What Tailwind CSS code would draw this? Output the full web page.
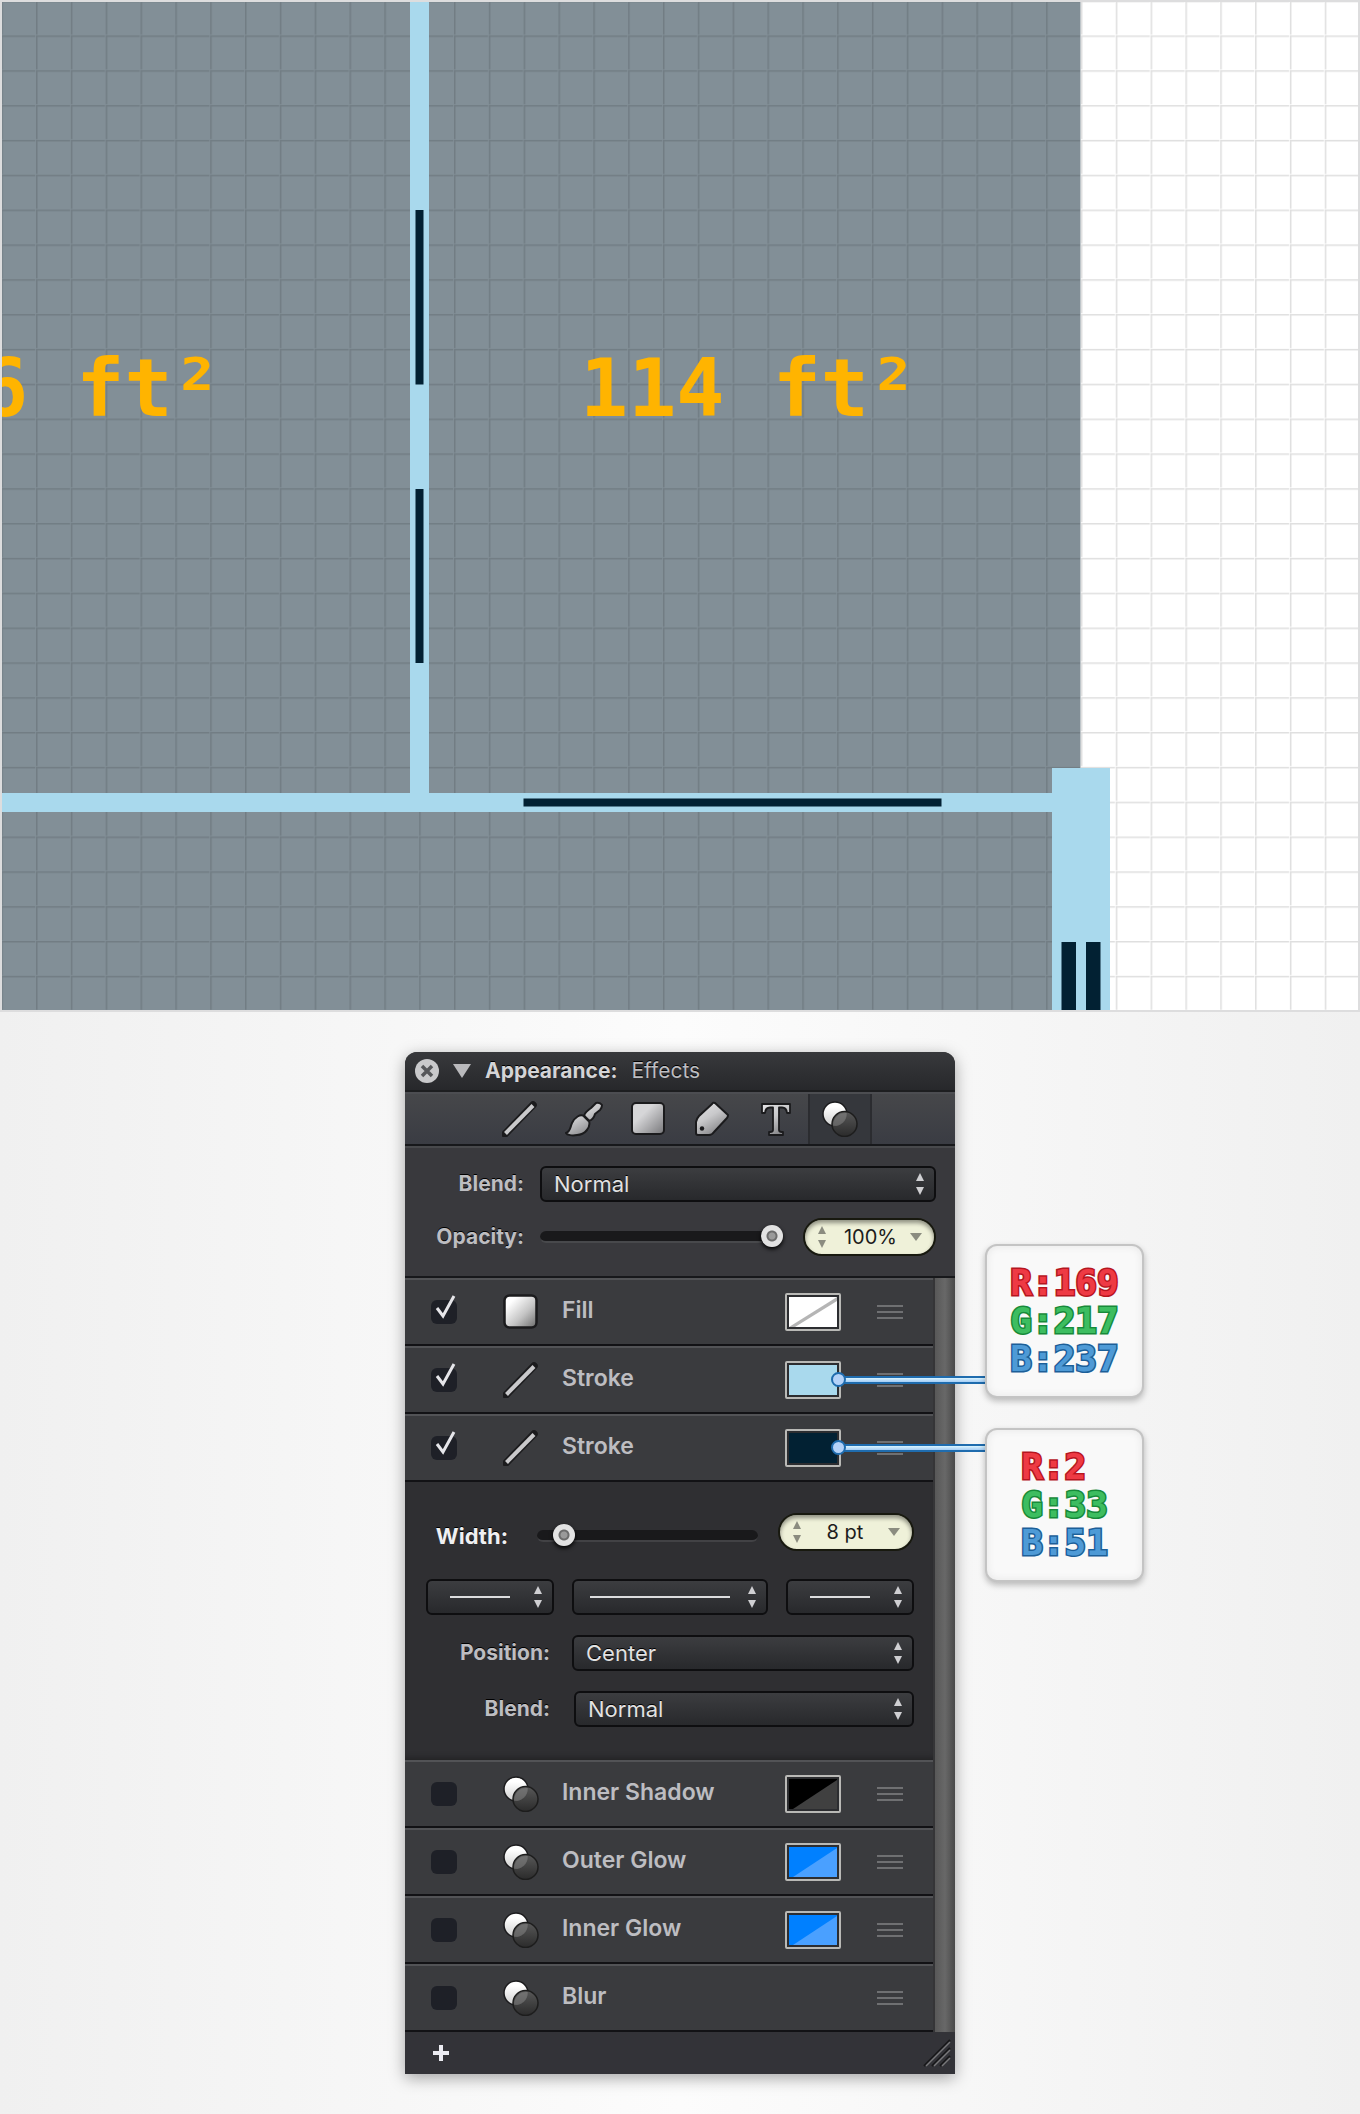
<!DOCTYPE html>
<html lang="en">
<head>
<meta charset="utf-8">
<meta name="viewport" content="width=device-width, initial-scale=1">
<title>Appearance: Effects</title>
<script src="https://cdn.jsdelivr.net/npm/@tailwindcss/browser@4"></script>
</head>
<body class="min-h-screen bg-linear-to-r from-[#f0f0f0] via-[#fcfcfc] to-[#f0f0f0] font-['Inter',sans-serif]">

<!-- Shared icons -->
<svg class="absolute size-0" aria-hidden="true">
  <defs>
    <linearGradient id="metal" x1="0" y1="0" x2="0.6" y2="1"><stop offset="0" stop-color="#e4e4e6"/><stop offset="0.5" stop-color="#c9c9cb"/><stop offset="1" stop-color="#858588"/></linearGradient>
    <linearGradient id="fillGrad" x1="0" y1="0" x2="1" y2="1"><stop offset="0.2" stop-color="#fff"/><stop offset="0.6" stop-color="#c4c4c4"/><stop offset="1" stop-color="#6a6a6a"/></linearGradient>
    <linearGradient id="toolFill" x1="0" y1="0" x2="1" y2="1"><stop offset="0.35" stop-color="#d6d6d8"/><stop offset="1" stop-color="#77777a"/></linearGradient>
    <linearGradient id="ball" x1="0" y1="0" x2="0" y2="1"><stop offset="0.2" stop-color="#fff"/><stop offset="1" stop-color="#cfcfcf"/></linearGradient>
    <linearGradient id="ballDark" x1="0" y1="0" x2="0" y2="1"><stop offset="0" stop-color="#5a5a5a"/><stop offset="1" stop-color="#2a2a2a"/></linearGradient>
  </defs>
  <symbol id="i-line" viewBox="0 0 36 36"><path d="M3 33 L31 4" stroke="#1b1b1d" stroke-width="7.5" stroke-linecap="round"/><path d="M3.500 32.500 L31 4.500" stroke="#c9c9cb" stroke-width="4"/></symbol>
  <symbol id="i-fill" viewBox="0 0 36 36"><rect x="1.500" y="1.500" width="32" height="32" rx="5" fill="url(#fillGrad)" stroke="#1b1b1d" stroke-width="2.500"/></symbol>
  <symbol id="i-square" viewBox="0 0 36 36"><rect x="2" y="2" width="32" height="31" rx="4" fill="url(#toolFill)" stroke="#1b1b1d" stroke-width="2"/></symbol>
  <symbol id="i-fx" viewBox="0 0 36 36"><circle cx="13" cy="13" r="12" fill="url(#ball)" stroke="#1b1b1d" stroke-width="1.500"/><circle cx="22.500" cy="23" r="12.500" fill="url(#ballDark)" fill-opacity="0.95" stroke="#1d1d1d" stroke-width="1.500"/><path d="M24.800 12 A12 12 0 0 1 11 24.800 A12.500 12.500 0 0 1 24.800 12" fill="#8a8a8a" fill-opacity="0.45"/></symbol>
  <symbol id="i-brush" viewBox="0 0 40 36"><path d="M2 32 C7 30 6 26 8 22 C11 16 16 13 20 15 C21 11 24 9 27 7 L32 2 Q36 1 38 4 Q38 7 36 9 L31 13 C30 17 28 19 25 20 C27 26 21 34 13 34 C8 35 3 34 2 32 Z" fill="url(#metal)" stroke="#1b1b1d" stroke-width="2" stroke-linejoin="round"/><path d="M20 15 L25 20" stroke="#1b1b1d" stroke-width="2.500"/></symbol>
  <symbol id="i-tag" viewBox="0 0 36 36"><path d="M21 2 L34 14 Q34 16 33 17 L20 31 Q18 34 15 34 L4 34 Q2 34 2 32 L2 21 Q3 17 5 15 L18 3 Q19 1 21 2 Z" fill="url(#metal)" stroke="#1b1b1d" stroke-width="2" stroke-linejoin="round"/><circle cx="8" cy="27.500" r="2.200" fill="#1b1b1d"/></symbol>
  <symbol id="i-type" viewBox="0 0 32 36"><path d="M2 3 H30 V12 H27 Q26.500 6.500 22 6.500 H19 V29 Q19 31 22 31 H23 V34 H9 V31 H10 Q13 31 13 29 V6.500 H10 Q5.500 6.500 5 12 H2 Z" fill="url(#metal)" stroke="#1b1b1d" stroke-width="1.800" stroke-linejoin="round"/></symbol>
  <symbol id="i-updown" viewBox="0 0 10 24"><path d="M5 1 L9 9 H1 Z M5 23 L9 15 H1 Z" fill="currentColor"/></symbol>
  <symbol id="i-check" viewBox="0 0 22 26"><path d="M2 14 L8 22 L19 2" fill="none" stroke="#e6e6ea" stroke-width="3"/></symbol>
  <symbol id="i-grip" viewBox="0 0 26 14"><path d="M0 1 H26 M0 7 H26 M0 13 H26" stroke="#6f7072" stroke-width="2"/></symbol>
</svg>

<main>
  <!-- Floor plan -->
  <svg class="block w-full" viewBox="0 0 1360 1012" role="img" aria-label="Floor plan">
    <defs>
      <pattern id="grid" x="1.200" y="0.600" width="34.830" height="34.830" patternUnits="userSpaceOnUse">
        <path d="M0 0.750 H34.830 M0.750 0 V34.830" transform="translate(-0.750 -0.750)" stroke="#000" stroke-opacity="0.180" stroke-width="3"/>
      </pattern>
    </defs>
    <rect width="1360" height="1012" fill="#ddddde"/>
    <rect x="2" y="2" width="1356" height="1008" fill="#fff"/>
    <rect x="2" y="2" width="1078.500" height="1008" fill="#828f97"/>
    <rect x="2" y="2" width="1356" height="1008" fill="url(#grid)" opacity="0.700"/>
    <g fill="#a9d9ed">
      <rect x="410" y="2" width="19" height="800"/>
      <rect x="2" y="793" width="1060" height="19"/>
      <rect x="1052" y="768" width="58" height="242"/>
    </g>
    <g fill="#022133">
      <rect x="415.500" y="210" width="8" height="174.500"/>
      <rect x="415.500" y="489" width="8" height="174"/>
      <rect x="523.500" y="798.500" width="418" height="8"/>
      <rect x="1061.500" y="942" width="14.500" height="68"/>
      <rect x="1086" y="942" width="14.500" height="68"/>
    </g>
    <g class="font-['DejaVu_Sans_Mono',monospace] text-[80px] font-bold" fill="#ffb400">
      <text x="-20" y="416" xml:space="preserve">6 ft²</text>
      <text x="580" y="416" xml:space="preserve">114 ft²</text>
    </g>
    <rect y="2" width="2" height="1008" fill="#ddddde"/>
  </svg>

  <section class="flex justify-center py-10">
    <div class="relative w-[550px] rounded-t-xl bg-[#39393d] text-[#bdbdc1] shadow-[0_4px_16px_rgba(0,0,0,0.35)]">

      <!-- Title bar -->
      <header class="flex h-10 items-center rounded-t-xl border-b-2 border-[#1d1e20] bg-linear-to-b from-[#38393c] to-[#27282b] pl-[10px] text-[21px] [text-shadow:0_-1px_0_#000]">
        <button class="size-6 rounded-full bg-[#c9c9cb]" aria-label="Close"><svg class="size-6" viewBox="0 0 24 24"><path d="M7 7 L17 17 M17 7 L7 17" stroke="#56575a" stroke-width="3.500"/></svg></button>
        <button class="ml-[14px]" aria-label="Collapse"><svg class="h-[14px] w-[18px]" viewBox="0 0 18 14"><path d="M0 0 H18 L9 14 Z" fill="#b9b9bc"/></svg></button>
        <h1 class="ml-[14px] font-bold text-[#d4d4d6]">Appearance:</h1>
        <span class="ml-[14px]">Effects</span>
      </header>

      <!-- Tool tabs -->
      <nav class="flex h-[54px] justify-center border-t-2 border-b-2 border-t-[#4c4d51] border-b-[#17181b] bg-linear-to-b from-[#46474a] to-[#3a3c43]">
        <button class="flex w-16 items-center justify-center" aria-label="Stroke"><svg class="size-9"><use href="#i-line"/></svg></button>
        <button class="flex w-16 items-center justify-center" aria-label="Brush"><svg class="h-9 w-10"><use href="#i-brush"/></svg></button>
        <button class="flex w-16 items-center justify-center" aria-label="Fill"><svg class="size-9"><use href="#i-square"/></svg></button>
        <button class="flex w-16 items-center justify-center" aria-label="Label"><svg class="size-9"><use href="#i-tag"/></svg></button>
        <button class="flex w-16 items-center justify-center" aria-label="Text"><svg class="h-9 w-8"><use href="#i-type"/></svg></button>
        <button class="flex w-16 items-center justify-center border-x-2 border-[#2b2c30] bg-[#35373c]" aria-label="Effects"><svg class="size-9"><use href="#i-fx"/></svg></button>
      </nav>

      <!-- Blend and opacity -->
      <div class="flex h-[132px] flex-col gap-4 border-t-2 border-b-2 border-t-[#48494c] border-b-[#17181b] pt-[18px] pr-[19px]">
        <div class="flex items-center">
          <label for="blend" class="w-[119px] text-right text-[21px] font-bold [text-shadow:0_-1px_0_#000]">Blend:</label>
          <div class="relative ml-4 flex-1">
            <select id="blend" class="h-9 w-full appearance-none rounded-md border-2 border-[#0e0e10] bg-linear-to-b from-[#3c3d40] to-[#28292c] px-3 text-[22px] leading-7 text-[#e2e2e2] [text-shadow:0_-1px_0_#000]"><option>Normal</option></select>
            <svg class="pointer-events-none absolute top-[6px] right-[11px] h-6 w-[10px] text-[#cfcfd2]"><use href="#i-updown"/></svg>
          </div>
        </div>
        <div class="flex h-[38px] items-center">
          <label for="opacity" class="w-[119px] text-right text-[21px] font-bold [text-shadow:0_-1px_0_#000]">Opacity:</label>
          <input id="opacity" type="range" value="100" class="ml-4 h-3 min-w-0 flex-1 appearance-none rounded-full border-b-2 border-[#48494c] bg-[#19191b] [&::-webkit-slider-thumb]:size-[22px] [&::-webkit-slider-thumb]:appearance-none [&::-webkit-slider-thumb]:rounded-full [&::-webkit-slider-thumb]:bg-[radial-gradient(circle,#9a9a9a_0_3px,#6c6c6c_4px_5px,#e2e2e2_6px)] [&::-webkit-slider-thumb]:shadow-[0_2px_4px_#000]">
          <div class="ml-5 flex h-[38px] w-[133px] items-center rounded-full border-2 border-[#18190f] bg-[#eff1d9] px-3 text-[#8b8c80] shadow-[inset_0_3px_4px_rgba(0,0,0,0.4)]">
            <svg class="h-6 w-[10px]"><use href="#i-updown"/></svg>
            <input aria-label="Opacity value" value="100%" class="w-0 flex-1 pl-1 text-center text-xl text-[#1c1c1c]">
            <svg class="h-[10px] w-3" viewBox="0 0 12 10"><path d="M0 1 H12 L6 9 Z" fill="currentColor"/></svg>
          </div>
        </div>
      </div>

      <div class="flex">
        <div class="min-w-0 flex-1">
          <ul>
            <li class="flex h-[68px] items-center border-t-2 border-b-2 border-t-[#525356] border-b-[#121215] bg-[#3a3b3e] pr-[30px] pl-[26px]">
              <span class="relative h-6"><input id="r1" type="checkbox" checked class="peer h-6 w-[26px] appearance-none rounded-md bg-[#1e2027]"><svg class="pointer-events-none absolute -top-[6px] left-1 hidden h-[26px] w-[22px] peer-checked:block"><use href="#i-check"/></svg></span>
              <svg class="ml-[46px] size-9"><use href="#i-fill"/></svg>
              <label for="r1" class="ml-[23px] flex-1 pb-1 text-[23px] leading-8 font-semibold">Fill</label>
              <button class="h-[38px] w-14 rounded-xs border-2 border-[#b9b9b6] bg-[#2c2d30] p-[2px]" aria-label="Fill color"><svg class="size-full" viewBox="0 0 48 30" preserveAspectRatio="none"><path d="M0 0 H48 V30 H0 Z" fill="#fff"/><path d="M0 30 L48 0 V4 L6 30 Z" fill="#b5b5b5"/></svg></button>
              <svg class="ml-9 h-[14px] w-[26px]"><use href="#i-grip"/></svg>
            </li>
            <li class="flex h-[68px] items-center border-t-2 border-b-2 border-t-[#525356] border-b-[#121215] bg-[#3a3b3e] pr-[30px] pl-[26px]">
              <span class="relative h-6"><input id="r2" type="checkbox" checked class="peer h-6 w-[26px] appearance-none rounded-md bg-[#1e2027]"><svg class="pointer-events-none absolute -top-[6px] left-1 hidden h-[26px] w-[22px] peer-checked:block"><use href="#i-check"/></svg></span>
              <svg class="ml-[46px] size-9"><use href="#i-line"/></svg>
              <label for="r2" class="ml-[23px] flex-1 pb-1 text-[23px] leading-8 font-semibold">Stroke</label>
              <button class="h-[38px] w-14 rounded-xs border-2 border-[#b9b9b6] bg-[#2c2d30] p-[2px]" aria-label="Stroke color"><span class="block size-full bg-[#a9d9ed]"></span></button>
              <svg class="ml-9 h-[14px] w-[26px]"><use href="#i-grip"/></svg>
            </li>
            <li class="flex h-[68px] items-center border-t-2 border-b-2 border-t-[#525356] border-b-[#121215] bg-[#3a3b3e] pr-[30px] pl-[26px]">
              <span class="relative h-6"><input id="r3" type="checkbox" checked class="peer h-6 w-[26px] appearance-none rounded-md bg-[#1e2027]"><svg class="pointer-events-none absolute -top-[6px] left-1 hidden h-[26px] w-[22px] peer-checked:block"><use href="#i-check"/></svg></span>
              <svg class="ml-[46px] size-9"><use href="#i-line"/></svg>
              <label for="r3" class="ml-[23px] flex-1 pb-1 text-[23px] leading-8 font-semibold">Stroke</label>
              <button class="h-[38px] w-14 rounded-xs border-2 border-[#b9b9b6] bg-[#2c2d30] p-[2px]" aria-label="Stroke color"><span class="block size-full bg-[#022133]"></span></button>
              <svg class="ml-9 h-[14px] w-[26px]"><use href="#i-grip"/></svg>
            </li>
          </ul>

          <!-- Settings of the selected stroke -->
          <div class="flex h-[278px] flex-col bg-[#2f2f32] pt-[31px] pr-[19px] pl-[21px] shadow-[inset_0_-6px_6px_-4px_rgba(0,0,0,0.3)]">
            <div class="flex h-[38px] items-center">
              <div class="flex min-w-0 flex-1 items-center pt-2">
                <label for="width" class="w-[82px] text-right text-[22px] leading-7 font-bold text-[#f0f0f2] [text-shadow:0_-1px_0_#000]">Width:</label>
                <input id="width" type="range" value="8" class="ml-[29px] h-3 min-w-0 flex-1 appearance-none rounded-full border-b-2 border-[#424245] bg-[#19191b] [&::-webkit-slider-thumb]:size-[22px] [&::-webkit-slider-thumb]:appearance-none [&::-webkit-slider-thumb]:rounded-full [&::-webkit-slider-thumb]:bg-[radial-gradient(circle,#9a9a9a_0_3px,#6c6c6c_4px_5px,#e2e2e2_6px)] [&::-webkit-slider-thumb]:shadow-[0_2px_4px_#000]">
              </div>
              <div class="ml-5 flex h-[38px] w-[136px] items-center rounded-full border-2 border-[#18190f] bg-[#eff1d9] px-3 text-[#8b8c80] shadow-[inset_0_3px_4px_rgba(0,0,0,0.4)]">
                <svg class="h-6 w-[10px]"><use href="#i-updown"/></svg>
                <input aria-label="Width value" value="8 pt" class="w-0 flex-1 text-center text-xl text-[#1c1c1c]">
                <svg class="h-[10px] w-3" viewBox="0 0 12 10"><path d="M0 1 H12 L6 9 Z" fill="currentColor"/></svg>
              </div>
            </div>
            <div class="mt-7 flex gap-[18px]">
              <button aria-label="Start cap" class="flex h-9 w-32 items-center justify-between rounded-md border-2 border-[#0e0e10] bg-linear-to-b from-[#3c3d40] to-[#28292c] pr-[9px] pl-[22px]"><span class="h-[2px] w-[60px] bg-[#dcdcde]"></span><svg class="h-6 w-[10px] text-[#cfcfd2]"><use href="#i-updown"/></svg></button>
              <button aria-label="Dash style" class="flex h-9 flex-1 items-center justify-between rounded-md border-2 border-[#0e0e10] bg-linear-to-b from-[#3c3d40] to-[#28292c] pr-[9px] pl-4"><span class="h-[2px] w-[140px] bg-[#dcdcde]"></span><svg class="h-6 w-[10px] text-[#cfcfd2]"><use href="#i-updown"/></svg></button>
              <button aria-label="End cap" class="flex h-9 w-32 items-center justify-between rounded-md border-2 border-[#0e0e10] bg-linear-to-b from-[#3c3d40] to-[#28292c] pr-[9px] pl-[22px]"><span class="h-[2px] w-[60px] bg-[#dcdcde]"></span><svg class="h-6 w-[10px] text-[#cfcfd2]"><use href="#i-updown"/></svg></button>
            </div>
            <div class="mt-5 flex items-center">
              <label for="position" class="w-[124px] text-right text-[21px] font-bold [text-shadow:0_-1px_0_#000]">Position:</label>
              <div class="relative ml-[22px] flex-1">
                <select id="position" class="h-9 w-full appearance-none rounded-md border-2 border-[#0e0e10] bg-linear-to-b from-[#3c3d40] to-[#28292c] px-3 text-[22px] leading-7 text-[#e2e2e2] [text-shadow:0_-1px_0_#000]"><option>Center</option></select>
                <svg class="pointer-events-none absolute top-[6px] right-[11px] h-6 w-[10px] text-[#cfcfd2]"><use href="#i-updown"/></svg>
              </div>
            </div>
            <div class="mt-5 flex items-center">
              <label for="strokeBlend" class="w-[124px] text-right text-[21px] font-bold [text-shadow:0_-1px_0_#000]">Blend:</label>
              <div class="relative ml-6 flex-1">
                <select id="strokeBlend" class="h-9 w-full appearance-none rounded-md border-2 border-[#0e0e10] bg-linear-to-b from-[#3c3d40] to-[#28292c] px-3 text-[22px] leading-7 text-[#e2e2e2] [text-shadow:0_-1px_0_#000]"><option>Normal</option></select>
                <svg class="pointer-events-none absolute top-[6px] right-[11px] h-6 w-[10px] text-[#cfcfd2]"><use href="#i-updown"/></svg>
              </div>
            </div>
          </div>

          <ul>
            <li class="flex h-[68px] items-center border-t-2 border-b-2 border-t-[#525356] border-b-[#121215] bg-[#3a3b3e] pr-[30px] pl-[26px]">
              <input id="r4" type="checkbox" class="h-6 w-[26px] appearance-none rounded-md bg-[#1e2027] checked:bg-[#8a8b90]">
              <svg class="ml-[46px] size-9"><use href="#i-fx"/></svg>
              <label for="r4" class="ml-[23px] flex-1 pb-1 text-[23px] leading-8 font-semibold">Inner Shadow</label>
              <button class="h-[38px] w-14 rounded-xs border-2 border-[#b9b9b6] bg-[#2c2d30] p-[2px]" aria-label="Inner Shadow color"><svg class="size-full" viewBox="0 0 48 30" preserveAspectRatio="none"><path d="M0 0 H48 V30 H0 Z" fill="#000"/><path d="M4 30 L48 1 V30 Z" fill="#404040"/></svg></button>
              <svg class="ml-9 h-[14px] w-[26px]"><use href="#i-grip"/></svg>
            </li>
            <li class="flex h-[68px] items-center border-t-2 border-b-2 border-t-[#525356] border-b-[#121215] bg-[#3a3b3e] pr-[30px] pl-[26px]">
              <input id="r5" type="checkbox" class="h-6 w-[26px] appearance-none rounded-md bg-[#1e2027] checked:bg-[#8a8b90]">
              <svg class="ml-[46px] size-9"><use href="#i-fx"/></svg>
              <label for="r5" class="ml-[23px] flex-1 pb-1 text-[23px] leading-8 font-semibold">Outer Glow</label>
              <button class="h-[38px] w-14 rounded-xs border-2 border-[#b9b9b6] bg-[#2c2d30] p-[2px]" aria-label="Outer Glow color"><svg class="size-full" viewBox="0 0 48 30" preserveAspectRatio="none"><path d="M0 0 H48 V30 H0 Z" fill="#0080ff"/><path d="M4 30 L48 1 V30 Z" fill="#4aa0ff"/></svg></button>
              <svg class="ml-9 h-[14px] w-[26px]"><use href="#i-grip"/></svg>
            </li>
            <li class="flex h-[68px] items-center border-t-2 border-b-2 border-t-[#525356] border-b-[#121215] bg-[#3a3b3e] pr-[30px] pl-[26px]">
              <input id="r6" type="checkbox" class="h-6 w-[26px] appearance-none rounded-md bg-[#1e2027] checked:bg-[#8a8b90]">
              <svg class="ml-[46px] size-9"><use href="#i-fx"/></svg>
              <label for="r6" class="ml-[23px] flex-1 pb-1 text-[23px] leading-8 font-semibold">Inner Glow</label>
              <button class="h-[38px] w-14 rounded-xs border-2 border-[#b9b9b6] bg-[#2c2d30] p-[2px]" aria-label="Inner Glow color"><svg class="size-full" viewBox="0 0 48 30" preserveAspectRatio="none"><path d="M0 0 H48 V30 H0 Z" fill="#0080ff"/><path d="M4 30 L48 1 V30 Z" fill="#4aa0ff"/></svg></button>
              <svg class="ml-9 h-[14px] w-[26px]"><use href="#i-grip"/></svg>
            </li>
            <li class="flex h-[68px] items-center border-t-2 border-b-2 border-t-[#525356] border-b-[#121215] bg-[#3a3b3e] pr-[30px] pl-[26px]">
              <input id="r7" type="checkbox" class="h-6 w-[26px] appearance-none rounded-md bg-[#1e2027] checked:bg-[#8a8b90]">
              <svg class="ml-[46px] size-9"><use href="#i-fx"/></svg>
              <label for="r7" class="ml-[23px] flex-1 pb-1 text-[23px] leading-8 font-semibold">Blur</label>
              <svg class="ml-9 h-[14px] w-[26px]"><use href="#i-grip"/></svg>
            </li>
          </ul>
        </div>
        <div class="w-[22px] border-l-2 border-[#353537] bg-linear-to-r from-[#585858] via-[#686868] to-[#4a4a4a]"></div>
      </div>

      <footer class="flex h-[42px] items-center justify-between bg-[#333338] pr-1 pl-7">
        <button aria-label="Add effect"><svg class="size-4" viewBox="0 0 16 16"><path d="M8 0 V16 M0 8 H16" stroke="#ececf2" stroke-width="4"/></svg></button>
        <svg class="h-7 w-7" viewBox="0 0 28 28"><g stroke="#18181a" stroke-width="2"><path d="M1 27 L27 1 M9 27 L27 9 M17 27 L27 17"/></g><g stroke="#77777a" stroke-width="1.500"><path d="M3 27 L27 3 M11 27 L27 11 M19 27 L27 19"/></g></svg>
      </footer>

      <!-- Colour callouts, pinned over the stroke swatches -->
      <div class="absolute top-[320px] left-[426px] flex w-[154px] items-center">
        <span class="z-10 size-[15px] rounded-full border-2 border-[#1f6cae] bg-[#b4d2f8]"></span>
        <span class="-ml-1 h-2 flex-1 border-y-2 border-[#1f6cae] bg-linear-to-b from-[#d9f4ff] to-[#a5cdf5]"></span>
      </div>
      <div class="absolute top-[388px] left-[426px] flex w-[154px] items-center">
        <span class="z-10 size-[15px] rounded-full border-2 border-[#1f6cae] bg-[#b4d2f8]"></span>
        <span class="-ml-1 h-2 flex-1 border-y-2 border-[#1f6cae] bg-linear-to-b from-[#d9f4ff] to-[#a5cdf5]"></span>
      </div>
      <aside class="absolute top-48 left-[580px] flex h-[154px] w-[159px] justify-center rounded-xl border-2 border-[#c4c4c4] bg-[#f9f9f9] pt-[18px] font-['DejaVu_Sans_Mono',monospace] text-4xl leading-[38px] font-bold [paint-order:stroke] shadow-[0_3px_6px_rgba(0,0,0,0.25),inset_0_0_8px_rgba(0,0,0,0.08)]">
        <div>
          <p class="text-[#ee3a44] [-webkit-text-stroke:3px_#b5161f]">R:169</p>
          <p class="text-[#3dbd60] [-webkit-text-stroke:3px_#178a3a]">G:217</p>
          <p class="text-[#4e9ad6] [-webkit-text-stroke:3px_#1c5f98]">B:237</p>
        </div>
      </aside>
      <aside class="absolute top-[376px] left-[580px] flex h-[154px] w-[159px] justify-center rounded-xl border-2 border-[#c4c4c4] bg-[#f9f9f9] pt-[18px] font-['DejaVu_Sans_Mono',monospace] text-4xl leading-[38px] font-bold [paint-order:stroke] shadow-[0_3px_6px_rgba(0,0,0,0.25),inset_0_0_8px_rgba(0,0,0,0.08)]">
        <div>
          <p class="text-[#ee3a44] [-webkit-text-stroke:3px_#b5161f]">R:2</p>
          <p class="text-[#3dbd60] [-webkit-text-stroke:3px_#178a3a]">G:33</p>
          <p class="text-[#4e9ad6] [-webkit-text-stroke:3px_#1c5f98]">B:51</p>
        </div>
      </aside>
    </div>
  </section>
</main>
</body>
</html>
